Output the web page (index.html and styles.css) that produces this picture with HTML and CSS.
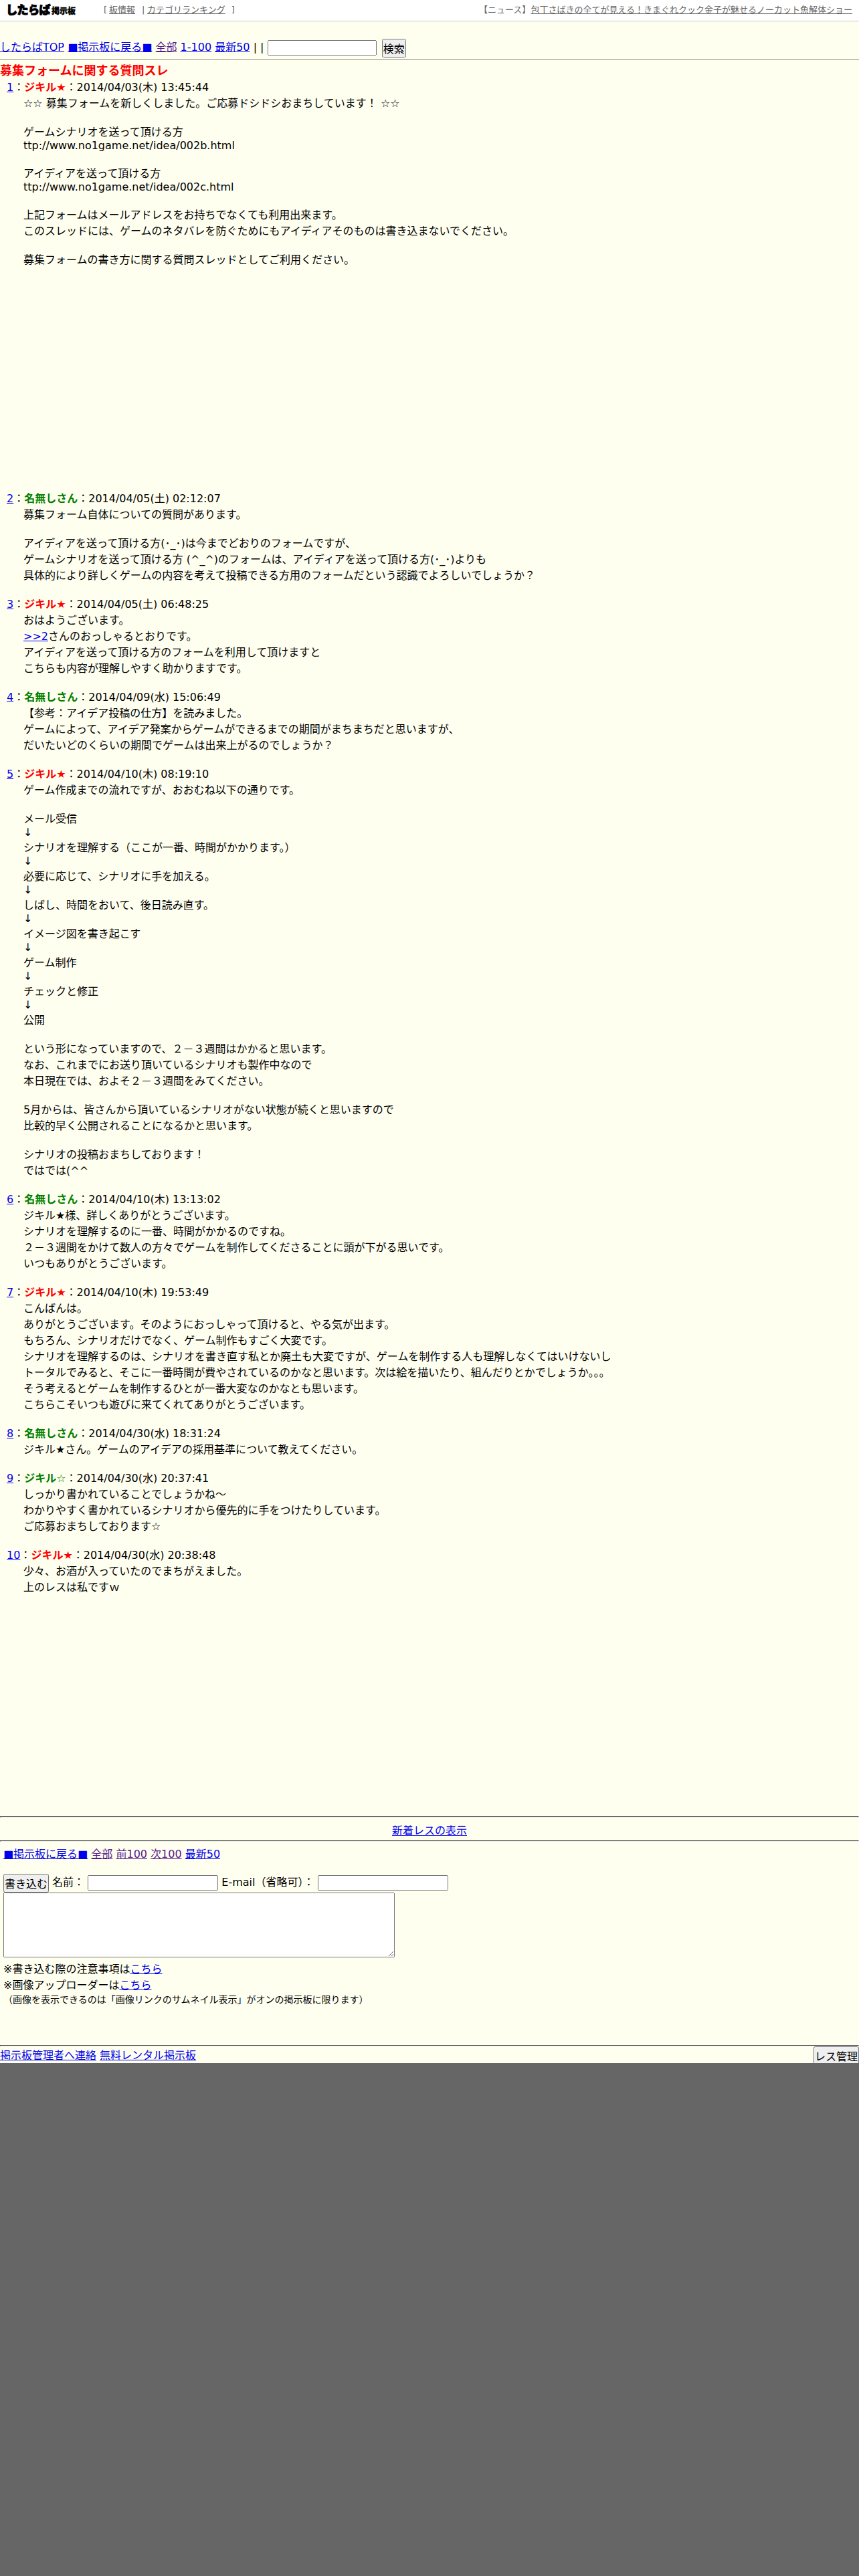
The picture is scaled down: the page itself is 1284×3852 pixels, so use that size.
FILE: index.html
```html
<!DOCTYPE html>
<html lang="ja">
<head>
<meta charset="utf-8">
<title>募集フォームに関する質問スレ</title>
<link rel="stylesheet" href="styles.css">
</head>
<body>
<div class="page">
<header class="site-header">
<div class="logo"><span class="logo-main">したらば</span><span class="logo-sub">掲示板</span></div>
<div class="site-links"><span>[</span><a href="#">板情報</a><span class="bar">|</span><a href="#">カテゴリランキング</a><span class="close">]</span></div>
<div class="news">【ニュース】<a href="#">包丁さばきの全てが見える！きまぐれクック金子が魅せるノーカット魚解体ショー</a></div>
</header>
<form class="thread-nav"><a href="#">したらばTOP</a> <a href="#">■掲示板に戻る■</a> <a class="visited" href="#">全部</a> <a href="#">1-100</a> <a href="#">最新50</a> | | <input class="search" type="text"> <button class="search-button" type="button">検索</button></form>
<h1>募集フォームに関する質問スレ</h1>
<dl class="posts">
<dt><a href="#">1</a>：<b class="owner">ジキル★</b>：2014/04/03(木) 13:45:44</dt>
<dd>☆☆ 募集フォームを新しくしました。ご応募ドシドシおまちしています！ ☆☆<br><br>ゲームシナリオを送って頂ける方<br>ttp://www.no1game.net/idea/002b.html<br><br>アイディアを送って頂ける方<br>ttp://www.no1game.net/idea/002c.html<br><br>上記フォームはメールアドレスをお持ちでなくても利用出来ます。<br>このスレッドには、ゲームのネタバレを防ぐためにもアイディアそのものは書き込まないでください。<br><br>募集フォームの書き方に関する質問スレッドとしてご利用ください。</dd>
<div class="ad-space"></div>
<dt><a href="#">2</a>：<b>名無しさん</b>：2014/04/05(土) 02:12:07</dt>
<dd>募集フォーム自体についての質問があります。<br><br>アイディアを送って頂ける方(･_･)は今までどおりのフォームですが、<br>ゲームシナリオを送って頂ける方 (^_^)のフォームは、アイディアを送って頂ける方(･_･)よりも<br>具体的により詳しくゲームの内容を考えて投稿できる方用のフォームだという認識でよろしいでしょうか？</dd>
<dt><a href="#">3</a>：<b class="owner">ジキル★</b>：2014/04/05(土) 06:48:25</dt>
<dd>おはようございます。<br><a href="#">&gt;&gt;2</a>さんのおっしゃるとおりです。<br>アイディアを送って頂ける方のフォームを利用して頂けますと<br>こちらも内容が理解しやすく助かりますです。</dd>
<dt><a href="#">4</a>：<b>名無しさん</b>：2014/04/09(水) 15:06:49</dt>
<dd>【参考：アイデア投稿の仕方】を読みました。<br>ゲームによって、アイデア発案からゲームができるまでの期間がまちまちだと思いますが、<br>だいたいどのくらいの期間でゲームは出来上がるのでしょうか？</dd>
<dt><a href="#">5</a>：<b class="owner">ジキル★</b>：2014/04/10(木) 08:19:10</dt>
<dd>ゲーム作成までの流れですが、おおむね以下の通りです。<br><br>メール受信<br>↓<br>シナリオを理解する（ここが一番、時間がかかります。）<br>↓<br>必要に応じて、シナリオに手を加える。<br>↓<br>しばし、時間をおいて、後日読み直す。<br>↓<br>イメージ図を書き起こす<br>↓<br>ゲーム制作<br>↓<br>チェックと修正<br>↓<br>公開<br><br>という形になっていますので、２－３週間はかかると思います。<br>なお、これまでにお送り頂いているシナリオも製作中なので<br>本日現在では、およそ２－３週間をみてください。<br><br>5月からは、皆さんから頂いているシナリオがない状態が続くと思いますので<br>比較的早く公開されることになるかと思います。<br><br>シナリオの投稿おまちしております！<br>ではでは(^^</dd>
<dt><a href="#">6</a>：<b>名無しさん</b>：2014/04/10(木) 13:13:02</dt>
<dd>ジキル★様、詳しくありがとうございます。<br>シナリオを理解するのに一番、時間がかかるのですね。<br>２－３週間をかけて数人の方々でゲームを制作してくださることに頭が下がる思いです。<br>いつもありがとうございます。</dd>
<dt><a href="#">7</a>：<b class="owner">ジキル★</b>：2014/04/10(木) 19:53:49</dt>
<dd>こんばんは。<br>ありがとうございます。そのようにおっしゃって頂けると、やる気が出ます。<br>もちろん、シナリオだけでなく、ゲーム制作もすごく大変です。<br>シナリオを理解するのは、シナリオを書き直す私とか廃土も大変ですが、ゲームを制作する人も理解しなくてはいけないし<br>トータルでみると、そこに一番時間が費やされているのかなと思います。次は絵を描いたり、組んだりとかでしょうか｡｡｡<br>そう考えるとゲームを制作するひとが一番大変なのかなとも思います。<br>こちらこそいつも遊びに来てくれてありがとうございます。</dd>
<dt><a href="#">8</a>：<b>名無しさん</b>：2014/04/30(水) 18:31:24</dt>
<dd>ジキル★さん。ゲームのアイデアの採用基準について教えてください。</dd>
<dt><a href="#">9</a>：<b>ジキル☆</b>：2014/04/30(水) 20:37:41</dt>
<dd>しっかり書かれていることでしょうかね～<br>わかりやすく書かれているシナリオから優先的に手をつけたりしています。<br>ご応募おまちしております☆</dd>
<dt><a href="#">10</a>：<b class="owner">ジキル★</b>：2014/04/30(水) 20:38:48</dt>
<dd>少々、お酒が入っていたのでまちがえました。<br>上のレスは私ですｗ</dd>
</dl>
<div class="bottom-ad"></div>
<hr>
<div class="new-posts"><a href="#">新着レスの表示</a></div>
<hr>
<div class="reply">
<nav class="reply-nav"><a href="#">■掲示板に戻る■</a> <a class="visited" href="#">全部</a> <a class="visited" href="#">前100</a> <a class="visited" href="#">次100</a> <a href="#">最新50</a></nav>
<form>
<div class="fields"><button type="button">書き込む</button> 名前： <input type="text"> E-mail（省略可）： <input type="text"></div>
<textarea></textarea>
</form>
<div>※書き込む際の注意事項は<a href="#">こちら</a></div>
<div>※画像アップローダーは<a href="#">こちら</a></div>
<div class="small">（画像を表示できるのは「画像リンクのサムネイル表示」がオンの掲示板に限ります）</div>
</div>
<hr>
<footer><div class="footer-links"><a href="#">掲示板管理者へ連絡</a> <a href="#">無料レンタル掲示板</a></div><button type="button">レス管理</button></footer>
</div>
</body>
</html>
```
FILE: styles.css
```css
* { margin: 0; padding: 0; box-sizing: border-box; }
html { background: #666; }
body { font: 16px "DejaVu Sans", "Noto Sans CJK JP", sans-serif; color: #000; }
.page { height: 3085px; background: #fffff0; }
a { color: #0000ee; text-decoration: underline; }
a.visited { color: #551a8b; }
input, button, textarea { font: inherit; vertical-align: middle; }
button { padding: 0; white-space: nowrap; }

.site-header {
  display: flex;
  height: 32px;
  background: #fff;
  border-bottom: 1px solid #ccc;
  font-size: 13px;
  line-height: 19px;
  color: #666;
  padding: 5px 10px 0 9px;
}
.site-header a { color: #666; }
.logo {
  display: flex;
  width: 146px;
  color: #000;
  font-family: "Noto Sans CJK JP", sans-serif;
  font-weight: 900;
  -webkit-text-stroke: 1px #000;
}
.logo-main { font-size: 17px; width: 68px; letter-spacing: -0.5px; line-height: 18px; }
.logo-sub { font-size: 12px; line-height: 21px; -webkit-text-stroke-width: 0.4px; }
.site-links { display: flex; }
.site-links span { width: 8px; }
.site-links .bar { width: 8px; margin-left: 10px; }
.site-links .close { margin-left: 9px; }
.news { margin-left: auto; }

.thread-nav { height: 57px; padding-top: 25px; white-space: nowrap; border-bottom: 1px solid #888880; }
.search { width: 163px; height: 23px; }
.search-button { margin-left: 3px; }
h1 { font-size: 18px; line-height: 27px; color: #f00; padding-top: 3px; height: 28px; }

.posts dt { padding-left: 10px; }
.posts dd { padding: 0 0 19px 35px; white-space: nowrap; }
.posts b { color: #008000; }
.posts b.owner { color: #f00; }
.ad-space { height: 314px; }
.bottom-ad { height: 313px; }
hr { border: 1px inset #999; border-color: #999 #eee #eee #999; }
.new-posts { text-align: center; height: 34px; padding-top: 6px; }

.reply { padding: 5px 5px 0; height: 304px; }
.reply-nav { height: 42px; }
.fields { height: 29px; white-space: nowrap; }
.fields input { width: 195px; height: 23px; }
textarea { display: block; width: 585px; height: 97px; margin-bottom: 4px; }
.small { font-size: 14px; }
footer { display: flex; justify-content: space-between; height: 28px; }
footer button { width: 68px; height: 28px; }
```
